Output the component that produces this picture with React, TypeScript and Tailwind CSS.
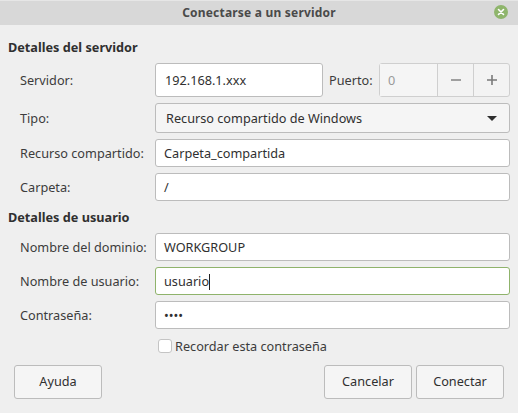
const font = { fontFamily: '"Noto Sans", sans-serif' };

function Field({ label, value, focus, caret }: { label: string; value: string; focus?: boolean; caret?: boolean }) {
  return (
    <div className="flex items-center h-[28px]">
      <div className="w-[147px] shrink-0 pl-[12px] pt-px text-[12.7px] whitespace-nowrap text-[#3c3c3c]">{label}</div>
      <div className={`flex-1 h-[28px] bg-white border rounded-[3px] pl-[8px] pt-px flex items-center text-[12.7px] text-[#303030] ${focus ? "border-[#8fb36b]" : "border-[#bcbcbc]"}`}>
        {value}
        {caret && <span className="w-px h-[16px] bg-[#222]" />}
      </div>
    </div>
  );
}

export default function App() {
  return (
    <div className="w-[518px] h-[413px] bg-[#efefef] flex flex-col overflow-hidden" style={font}>
      <div className="h-[25px] bg-[#d8d8d8] border-t border-[#e6e6e6] flex items-center justify-center relative shrink-0">
        <span className="text-[12px] font-bold text-[#4a4a4a] tracking-[0.2px]">Conectarse a un servidor</span>
        <span className="absolute right-[10px] top-[4px] w-[14px] h-[14px] rounded-full bg-[#8fb56c] flex items-center justify-center">
          <svg width="8" height="8" viewBox="0 0 8 8"><path d="M1.5 1.5l5 5M6.5 1.5l-5 5" stroke="#fff" strokeWidth="1.6" strokeLinecap="round" /></svg>
        </span>
      </div>
      <div className="flex-1 pl-[8px] pr-[8px] flex flex-col">
        <div className="mt-[14px] h-[18px] text-[12.7px] font-bold text-[#303030] flex items-center">Detalles del servidor</div>
        <div className="mt-[6px] flex items-center h-[34px]">
          <div className="w-[147px] shrink-0 pl-[12px] pt-px text-[12.7px] text-[#3c3c3c]">Servidor:</div>
          <div className="w-[168px] h-[34px] bg-white border border-[#bcbcbc] rounded-[3px] pl-[9px] pt-px flex items-center text-[12.7px] text-[#303030]">192.168.1.xxx</div>
          <div className="ml-[6px] w-[50px] pt-px text-[12.7px] text-[#3c3c3c]">Puerto:</div>
          <div className="flex-1 h-[34px] border border-[#cfcfcf] rounded-[3px] flex items-stretch bg-[#f3f3f3]">
            <div className="w-[57px] pl-[8px] pt-px flex items-center text-[12.7px] text-[#9a9a9a] bg-[#f5f5f5]">0</div>
            <div className="w-[36px] border-l border-[#cfcfcf] flex items-center justify-center">
              <svg width="10" height="10" viewBox="0 0 10 10"><path d="M0 5h10" stroke="#8a8a8a" strokeWidth="1.6" /></svg>
            </div>
            <div className="flex-1 border-l border-[#cfcfcf] flex items-center justify-center">
              <svg width="10" height="10" viewBox="0 0 10 10"><path d="M0 5h10M5 0v10" stroke="#7a7a7a" strokeWidth="1.6" /></svg>
            </div>
          </div>
        </div>
        <div className="mt-[6px] flex items-center h-[30px]">
          <div className="w-[147px] shrink-0 pl-[12px] pt-px text-[12.7px] text-[#3c3c3c]">Tipo:</div>
          <div className="flex-1 h-[30px] bg-[#f5f5f5] border border-[#bcbcbc] rounded-[3px] pl-[10px] pr-[12px] pt-px flex items-center justify-between text-[12.7px] text-[#303030]">
            <span>Recurso compartido de Windows</span>
            <span className="w-0 h-0 border-l-[5px] border-r-[5px] border-t-[5px] border-l-transparent border-r-transparent border-t-[#2e2e2e]" />
          </div>
        </div>
        <div className="mt-[6px] flex flex-col gap-[6px]">
          <Field label="Recurso compartido:" value="Carpeta_compartida" />
          <Field label="Carpeta:" value="/" />
        </div>
        <div className="mt-[8px] h-[18px] text-[12.7px] font-bold text-[#303030] flex items-center">Detalles de usuario</div>
        <div className="mt-[6px] flex flex-col gap-[6px]">
          <Field label="Nombre del dominio:" value="WORKGROUP" />
          <Field label="Nombre de usuario:" value="usuario" focus caret />
          <Field label="Contraseña:" value="••••" />
        </div>
        <div className="mt-[10px] ml-[150px] flex items-center gap-[3px] h-[14px]">
          <span className="w-[14px] h-[14px] bg-white border border-[#c4c4c4] rounded-[3px]" />
          <span className="pt-px text-[12.7px] text-[#3c3c3c]">Recordar esta contraseña</span>
        </div>
        <div className="mt-[12px] flex items-center pl-[6px] pr-[6px]">
          <button className="w-[88px] h-[34px] bg-[#f5f5f5] border border-[#bcbcbc] rounded-[3px] text-[12.7px] text-[#303030]">Ayuda</button>
          <div className="flex-1" />
          <button className="w-[88px] h-[34px] bg-[#f5f5f5] border border-[#bcbcbc] rounded-[3px] text-[12.7px] text-[#303030]">Cancelar</button>
          <button className="ml-[4px] w-[88px] h-[34px] bg-[#f5f5f5] border border-[#bcbcbc] rounded-[3px] text-[12.7px] text-[#303030]">Conectar</button>
        </div>
      </div>
    </div>
  );
}
